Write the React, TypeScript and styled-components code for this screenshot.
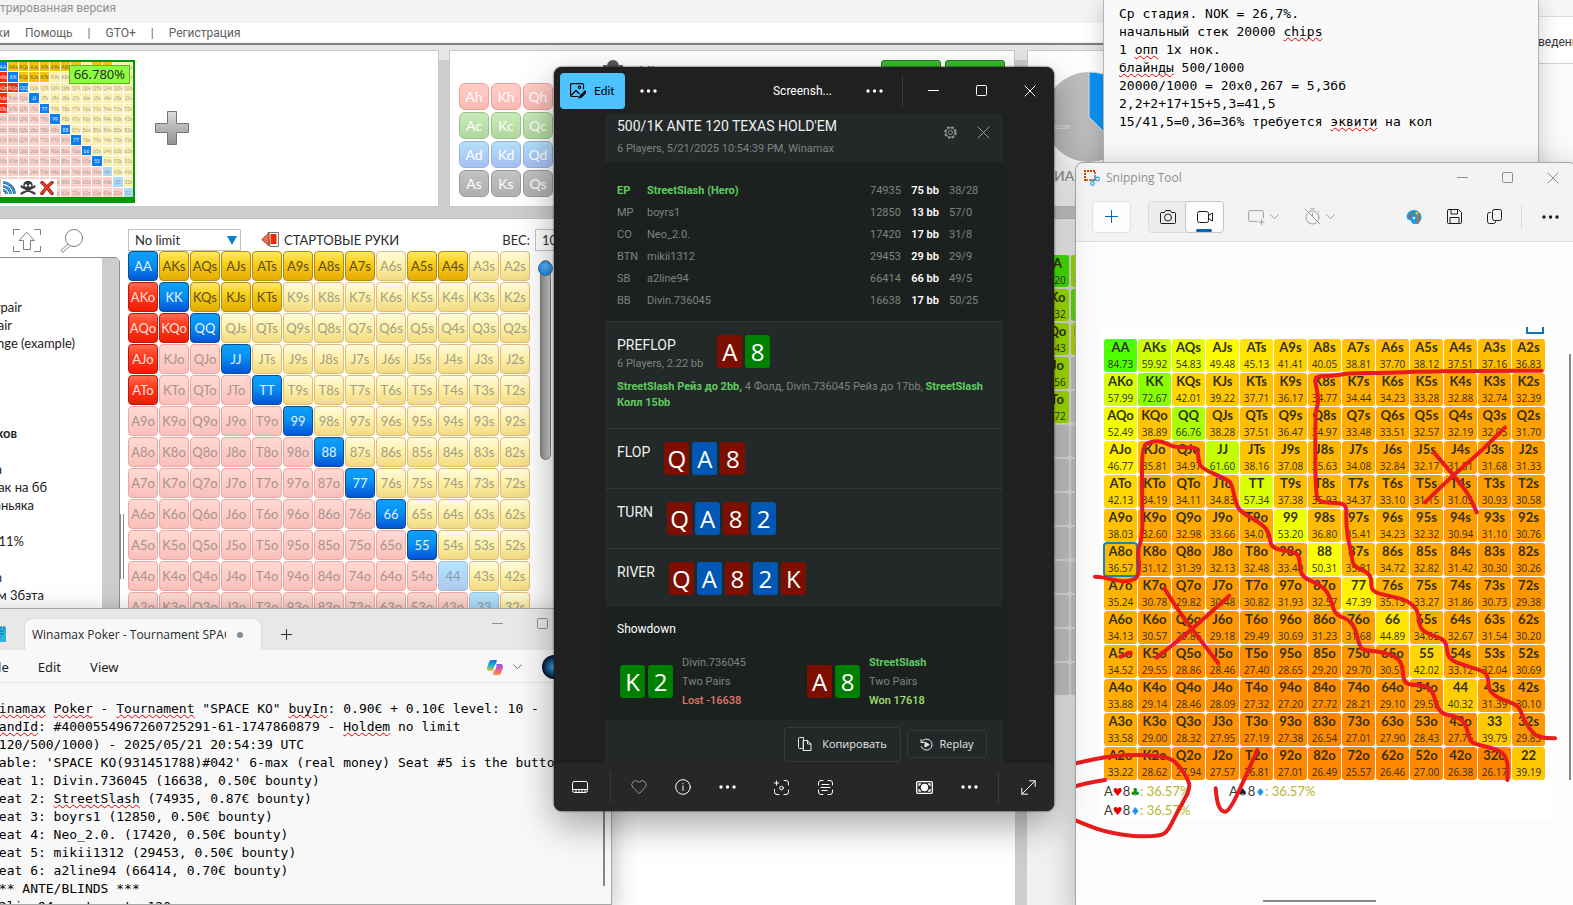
import React from "react";
import styled, { createGlobalStyle, css } from "styled-components";

const ui = `"Noto Sans", "Liberation Sans", sans-serif`;
const lato = `Lato, "Noto Sans", sans-serif`;
const open = `"Open Sans", "Noto Sans", sans-serif`;
const roboto = `Roboto, "Noto Sans", sans-serif`;
const mono = `"DejaVu Sans Mono", "Liberation Mono", monospace`;

const Global = createGlobalStyle`
  * { box-sizing: border-box; }
  html, body { margin: 0; padding: 0; height: 100%; overflow: hidden; }
  body { font-family: ${ui}; font-size: 12px; }
  button, input, select { font: inherit; color: inherit; margin: 0; }
  button { background: none; border: 0; padding: 0; }
  p, h1, h2, h3 { margin: 0; font-weight: 400; }
  svg { display: block; flex: none; }
`;

/* ---------- data ---------- */

const RANKS = "AKQJT98765432".split("");

const comboAt = (row: number, col: number) => {
  if (row === col) return RANKS[row] + RANKS[row];
  return col > row ? `${RANKS[row]}${RANKS[col]}s` : `${RANKS[col]}${RANKS[row]}o`;
};

const IN_RANGE = new Set(
  "AA KK QQ JJ TT 99 88 77 66 55 AKs AQs AJs ATs A9s A8s A7s A5s A4s KQs KJs KTs AKo AQo AJo ATo KQo".split(" ")
);

const CELLS = RANKS.flatMap((_, row) => RANKS.map((__, col) => {
  const label = comboAt(row, col);
  const kind: Kind = row === col ? "pair" : col > row ? "suited" : "offsuit";
  return { label, kind, on: IN_RANGE.has(label) };
}));

const EQUITY = [
  "84.73 59.92 54.83 49.48 45.13 41.41 40.05 38.81 37.70 38.12 37.51 37.16 36.83",
  "57.99 72.67 42.01 39.22 37.71 36.17 34.77 34.44 34.23 33.28 32.88 32.74 32.39",
  "52.49 38.89 66.76 38.28 37.51 36.47 34.97 33.48 33.51 32.57 32.19 32.05 31.70",
  "46.77 35.81 34.97 61.60 38.16 37.08 35.63 34.08 32.84 32.17 31.81 31.68 31.33",
  "42.13 34.19 34.11 34.83 57.34 37.38 35.93 34.37 33.10 31.15 31.05 30.93 30.58",
  "38.03 32.60 32.98 33.66 34.01 53.20 36.80 35.41 34.23 32.32 30.94 31.10 30.76",
  "36.57 31.12 31.39 32.13 32.48 33.40 50.31 35.81 34.72 32.82 31.42 30.30 30.26",
  "35.24 30.78 29.82 30.48 30.82 31.93 32.57 47.39 35.13 33.27 31.86 30.73 29.38",
  "34.13 30.57 29.86 29.18 29.49 30.69 31.23 31.68 44.89 34.05 32.67 31.54 30.20",
  "34.52 29.55 28.86 28.46 27.40 28.65 29.20 29.70 30.55 42.02 33.12 32.04 30.69",
  "33.88 29.14 28.46 28.09 27.32 27.20 27.72 28.21 29.10 29.53 40.32 31.39 30.10",
  "33.58 29.00 28.32 27.95 27.19 27.38 26.54 27.01 27.90 28.43 27.76 39.79 29.83",
  "33.22 28.62 27.94 27.57 26.81 27.01 26.49 25.57 26.46 27.00 26.38 26.17 39.19",
].map((r) => r.split(" "));

const heat = (v: number) =>
  v >= 50 ? `rgb(${Math.round((255 * (100 - v)) / 50)},255,0)` : `rgb(255,${Math.round((255 * v) / 50)},0)`;

/* ---------- shared ---------- */

const Desktop = styled.div`
  position: relative;
  height: 100vh;
  overflow: hidden;
  background: #e6e6e6;
`;

const Icon = ({ size = 16, children, sw = 1, h }: { size?: number; h?: number; sw?: number; children: React.ReactNode }) => (
  <svg width={size} height={h ?? size} viewBox={`0 0 ${size} ${h ?? size}`} fill="none" stroke="currentColor"
    strokeWidth={sw} strokeLinecap="round" strokeLinejoin="round" aria-hidden="true">{children}</svg>
);

const Dots = () => (
  <svg width="17" height="4" viewBox="0 0 17 4" fill="currentColor" aria-hidden="true">
    <circle cx="2" cy="2" r="1.7" /><circle cx="8.5" cy="2" r="1.7" /><circle cx="15" cy="2" r="1.7" />
  </svg>
);
const MinIcon = () => <Icon size={11}><path d="M.5 5.5h10" /></Icon>;
const MaxIcon = () => <Icon size={11}><rect x=".5" y=".5" width="10" height="10" rx="1" /></Icon>;
const CloseIcon = () => <Icon size={12}><path d="M1 1l10 10M11 1L1 11" /></Icon>;
const Chevron = () => <Icon size={9} h={6}><path d="M.5.7l4 4 4-4" /></Icon>;

const Squiggle = styled.span`
  text-decoration: underline wavy #e00000 1px;
  text-underline-offset: 1px;
  text-decoration-skip-ink: none;
`;

/* ---------- range analyser window ---------- */

const Analyser = styled.section`
  position: absolute;
  inset: 0 40px 0 -200px;
  display: flex;
  flex-direction: column;
  background: #fff;
  font-family: ${lato};
  color: #2b2b2b;
`;
const AnalyserTitle = styled.h1`
  width: 316px;
  height: 23px;
  font: 12px/16px ${roboto};
  text-align: right;
  color: #929292;
  white-space: nowrap;
`;
const TitleStrip = styled.div`background: #f3f3f3;`;
const MenuBar = styled.nav`
  display: flex;
  height: 20px;
  padding-left: 138px;
  align-items: center;
  gap: 15px;
  font: 12px/18px ${roboto};
  color: #636363;
  border-bottom: 1px solid #f0f0f0;
  button { flex: none; }
`;
const MenuFirst = styled.button`
  width: 72px;
  text-align: right;
`;
const UpperArea = styled.div`
  display: grid;
  grid-template-columns: 639px 10px 566px 12px 1fr;
  height: 175px;
  padding-top: 5px;
  padding-bottom: 11px;
  border-top: 2px solid #7d8183;
  background: linear-gradient(#e6e6e6 15px, #cdcdcd 15px);
`;
const Panel = styled.div<{ $col: number }>`
  grid-column: ${(p) => p.$col};
  background: #fff;
  border: 1px solid #c8c8c8;
  display: flex;
  min-width: 0;
`;
const Thumb = styled.button`
  position: relative;
  margin: 9px 0 0 195px;
  width: 139px;
  height: 143px;
  border: 2px solid #009a00;
  border-bottom-width: 6px;
  background: #fff;
  display: block;
`;
const ThumbGrid = styled.span`
  display: grid;
  grid-template-columns: repeat(13, 1fr);
  grid-template-rows: repeat(13, 1fr);
  gap: 1px;
  height: 135px;
`;
const MINI = { pair: ["#0a80ee", "#a9daf8"], suited: ["#f0c40c", "#fcf0b0"], offsuit: ["#fb2b12", "#fccfc9"] };
type Kind = keyof typeof MINI;
const MiniCell = styled.span<{ $k: Kind; $on: boolean }>`
  background: ${(p) => MINI[p.$k][p.$on ? 0 : 1]};
  color: ${(p) => (p.$on && p.$k !== "suited" ? "#e8e8ff" : p.$on ? "#6a5c20" : "#a9a294")};
  font-size: 5px;
  line-height: 10px;
  text-align: center;
  overflow: hidden;
`;
const Percent = styled.span`
  position: absolute;
  top: 3px;
  right: 3px;
  padding: 0 4px;
  border: 1px solid #58b428;
  background: #8dff40;
  font: 13px/17px ${open};
  color: #222;
`;
const ThumbTools = styled.span`
  position: absolute;
  left: 3px;
  bottom: 0;
  width: 56px;
  height: 18px;
  padding-left: 1px;
  background: #fff;
  display: flex;
  gap: 4px;
  align-items: center;
`;
const AddRange = styled.button`
  align-self: center;
  margin: 0 0 2px 20px;
`;
const DeckGrid = styled.div`
  display: grid;
  grid-template-columns: repeat(3, 30px);
  grid-auto-rows: 27px;
  gap: 2px;
  margin: 32px 0 0 9px;
`;
const DECK: Record<string, string[]> = {
  h: ["#ffcdc8", "#fbb9b4", "#f0a09b"],
  c: ["#c8eab8", "#b2d6a2", "#96c48a"],
  d: ["#b4e0fb", "#a5bff2", "#93b4dc"],
  s: ["#c2c2c2", "#b0b0b0", "#9c9c9c"],
};
const DeckCard = styled.button<{ $s: string }>`
  border: 1px solid ${(p) => DECK[p.$s][2]};
  border-radius: 6px;
  background: linear-gradient(${(p) => DECK[p.$s][0]}, ${(p) => DECK[p.$s][1]});
  color: #fff;
  font: 14px/20px ${lato};
`;
const BoardArea = styled.div`
  margin: 9px 0 0 50px;
  display: flex;
  align-items: flex-start;
  gap: 16px;
`;
const BoardButtons = styled.div`
  display: flex;
  gap: 4px;
  margin-left: 204px;
`;
const GreenButton = styled.button`
  width: 60px;
  height: 22px;
  border: 1px solid #1f7f1f;
  border-radius: 3px;
  background: #3cbb30;
`;
const BoardTitle = styled.span`
  padding-top: 2px;
  font-size: 13px;
  line-height: 18px;
  color: #a06428;
`;
const StatsPanel = styled.div`
  display: flex;
  flex-direction: column;
  gap: 3px;
  padding: 20px 0 0 15px;
`;
const StatsTitle = styled.span`
  font: 14px/20px ${lato};
  color: #85888c;
  white-space: nowrap;
`;

const LowerArea = styled.div`
  flex: 1;
  display: grid;
  grid-template-columns: 320px 8px 887px 12px 1fr;
  border-top: 1px solid #c2c2c2;
  min-height: 0;
`;
const TreeColumn = styled.div`
  display: flex;
  flex-direction: column;
  min-height: 0;
`;
const TreeTools = styled.div`
  display: flex;
  gap: 18px;
  padding: 9px 0 0 212px;
  height: 38px;
  color: #808080;
`;
const Tree = styled.div`
  flex: 1;
  display: flex;
  border: 1px solid #8e8e8e;
  border-top-right-radius: 5px;
  overflow: hidden;
`;
const TreeRows = styled.ul`
  flex: 1;
  margin: 0;
  padding: 40px 0 0;
  list-style: none;
  font: 13px/18px ${lato};
  color: #222;
  li { height: 18px; text-align: right; white-space: nowrap; }
`;
const TreeRow = styled.li<{ $end: number; $bold?: boolean }>`
  padding-right: ${(p) => 302 - p.$end - 200}px;
  font-weight: ${(p) => (p.$bold ? 700 : 400)};
`;
const TreeScroll = styled.div`
  width: 17px;
  background: #cdcdcd;
`;
const Grip = styled.div`
  align-self: start;
  margin-top: 295px;
  height: 65px;
  width: 4px;
  border-right: 1px solid #8a8a8a;
  border-left: 1px solid #8a8a8a;
`;
const RangeColumn = styled.div`
  grid-column: 3;
  padding-top: 9px;
`;
const RangeHeader = styled.div`
  display: flex;
  height: 23px;
  align-items: center;
  font: 13px/20px ${lato};
`;
const LimitSelect = styled.select`
  display: block;
  width: 113px;
  height: 22px;
  padding: 0 0 0 6px;
  border: 1px solid #c2c2c2;
  border-radius: 0;
  appearance: none;
  background: #fff;
  font: 13px/18px ${lato};
`;
const SelectWrap = styled.label`
  position: relative;
  margin-right: 20px;
  svg { position: absolute; right: 4px; top: 7px; pointer-events: none; }
`;
const RangeTitle = styled.h2`
  margin: 0 auto 0 5px;
  font: 13px/20px ${lato};
`;
const WeightLabel = styled.label`
  display: flex;
  align-items: center;
  gap: 5px;
`;
const WeightInput = styled.input`
  width: 44px;
  height: 22px;
  padding: 0 6px;
  border: 1px solid #c2c2c2;
`;
const HeaderInner = styled.div`
  display: flex;
  align-items: center;
  width: 451px;
`;
const RangeBody = styled.div`
  display: flex;
  gap: 9px;
`;
const RangeGrid = styled.div`
  display: grid;
  grid-template-columns: repeat(13, 30px);
  grid-auto-rows: 30px;
  gap: 1px;
`;
const RANGE_SKIN: Record<Kind, [string, string]> = {
  pair: [
    "background:linear-gradient(#0fa0fa,#0790f0 45%,#0553d8);border-color:#0b4f86;color:#e4efff;",
    "background:linear-gradient(#b9e4fb,#abd9f8 50%,#b3c8ee);border-color:#9fc0dc;color:#8f9aa5;",
  ],
  suited: [
    "background:linear-gradient(#ffea62,#f9cf1a 40%,#e4ab00);border-color:#b98a12;color:#5b4c1a;",
    "background:linear-gradient(#fffbe0,#fff2a8 45%,#f1da84);border-color:#e2bb7a;color:#a19d8c;",
  ],
  offsuit: [
    "background:linear-gradient(#ff6a50,#ff3a1c 40%,#f01c04);border-color:#c01810;color:#ffe4e0;",
    "background:linear-gradient(#ffdad2,#fdcdc6 50%,#f9bfbb);border-color:#eda6a4;color:#a79490;",
  ],
};
const RangeCell = styled.button<{ $k: Kind; $on: boolean }>`
  border: 1px solid;
  border-radius: 4px;
  font: 13px/20px ${lato};
  ${(p) => RANGE_SKIN[p.$k][p.$on ? 0 : 1]}
`;
const WeightTrack = styled.div`
  width: 11px;
  height: 200px;
  margin: 9px 0 0 1px;
  border: 1px solid #7c7c7c;
  border-radius: 6px;
  background: linear-gradient(90deg, #8d8d8d, #cfcfcf);
`;
const WeightKnob = styled.div`
  width: 15px;
  height: 15px;
  margin-left: -3px;
  border-radius: 50%;
  border: 1px solid #1f6fb4;
  background: radial-gradient(circle at 50% 30%, #5cb8fa, #1378da);
`;
const Splitter = styled.div`
  grid-column: 4;
  background: #cdcdcd;
`;
const ResultColumn = styled.div`
  padding: 36px 0 0 10px;
  background: linear-gradient(#fafafa, #f0f0f0);
`;
const ResultGrid = styled.div`
  display: grid;
  grid-template-columns: repeat(3, 32px);
  grid-auto-rows: 32px;
  gap: 2px;
  width: max-content;
  background: #e6e6e6;
`;

const EquityCell = styled.div<{ $bg: string; $active?: boolean }>`
  display: flex;
  flex-direction: column;
  align-items: center;
  border-radius: 3px;
  background: ${(p) => p.$bg};
  color: #33301a;
  ${(p) => p.$active && css`outline: 2px solid #1a80c8; outline-offset: -1px;`}
`;
const EquityHand = styled.span`font: 700 13px/17px ${lato};`;
const EquityValue = styled.span`font: 10px/16px ${open};`;

const RESULTS: [string, string, string][] = [
  ["AA", "85.20", "#46ee00"], ["AKs", "67.04", "#a8e800"], ["AQs", "66.21", "#a8e800"],
  ["AKo", "65.32", "#a4ea00"], ["KK", "82.40", "#5aee00"], ["KQs", "63.40", "#a8e800"],
  ["AQo", "64.43", "#a8ea00"], ["KQo", "60.12", "#b8ea00"], ["QQ", "79.93", "#66ee00"],
  ["AJo", "63.56", "#a8ea00"], ["KJo", "0", "#cdcdcd"], ["QJo", "0", "#cdcdcd"],
  ["ATo", "62.72", "#a8ea00"], ["KTo", "0", "#cdcdcd"], ["QTo", "0", "#cdcdcd"],
];

const TREE: [string, number, boolean?][] = [
  ["Overpair", 22], ["Top pair", 12], ["Range (example)", 75], ["", 0], ["", 0], ["", 0], ["", 0],
  ["Рендж игроков", 17, true], ["", 0], ["Защита", 2], ["Колл атак на бб", 47], ["Против маньяка", 34], ["", 0],
  ["Стил 11%", 24], ["", 0], ["Open", 2], ["С опеном 3бэта", 44], ["Колл 3б", 32],
];

const AnalyserWindow = () => (
  <Analyser>
    <TitleStrip><AnalyserTitle>Зарегистрированная версия</AnalyserTitle></TitleStrip>
    <MenuBar>
      <MenuFirst>Настройки</MenuFirst><button>Помощь</button><span>|</span>
      <button>GTO+</button><span>|</span><button>Регистрация</button>
    </MenuBar>
    <UpperArea>
      <Panel $col={1}>
        <Thumb aria-label="Player range">
          <ThumbGrid>
            {CELLS.map((c) => <MiniCell key={c.label} $k={c.kind} $on={c.on}>{c.label}</MiniCell>)}
          </ThumbGrid>
          <Percent>66.780%</Percent>
          <ThumbTools>
            <svg width="14" height="14" viewBox="0 0 14 14" fill="none">
              <path d="M1 1.500C7 1.500 12.500 7 12.500 13M1 5.500C5 5.500 8.500 9 8.500 13M1 9.500C3 9.500 4.500 11 4.500 13" stroke="#0a5078" strokeWidth="2.600" />
              <path d="M1 1.500C7 1.500 12.500 7 12.500 13M1 5.500C5 5.500 8.500 9 8.500 13M1 9.500C3 9.500 4.500 11 4.500 13" stroke="#30a8e8" strokeWidth="1.400" />
            </svg>
            <svg width="16" height="14" viewBox="0 0 16 14">
              <path d="M1.500 5.500l13 7M14.500 5.500L1.500 12.500" stroke="#3a3a3a" strokeWidth="2.200" strokeLinecap="round" />
              <path d="M8 0C4.500 0 3.300 2 3.300 4.300c0 1.500.7 2.300 1.700 2.900v2.300h6V7.200c1-.6 1.700-1.400 1.700-2.900C12.700 2 11.500 0 8 0z" fill="#3a3a3a" />
              <circle cx="6" cy="4.600" r="1.300" fill="#fff" /><circle cx="10" cy="4.600" r="1.300" fill="#fff" />
            </svg>
            <svg width="14" height="14" viewBox="0 0 14 14" fill="none" strokeLinecap="round">
              <path d="M2 1.500Q6 5 12 12.500M12 1.500Q6 6 2 12.500" stroke="#8a1010" strokeWidth="3.400" />
              <path d="M2 1.500Q6 5 12 12.500M12 1.500Q6 6 2 12.500" stroke="#f03a28" strokeWidth="2" />
            </svg>
          </ThumbTools>
        </Thumb>
        <AddRange aria-label="Add range">
          <svg width="34" height="34" viewBox="0 0 34 34">
            <defs><linearGradient id="plus" x1="0" y1="0" x2="0" y2="1">
              <stop offset="0" stopColor="#dcdcdc" /><stop offset="1" stopColor="#909090" />
            </linearGradient></defs>
            <path d="M12.500.5h9v12h12v9h-12v12h-9v-12H.5v-9h12z" fill="url(#plus)" stroke="#747474" />
          </svg>
        </AddRange>
      </Panel>
      <Panel $col={3}>
        <DeckGrid>
          {["h", "c", "d", "s"].flatMap((s) => ["A", "K", "Q"].map((r) => <DeckCard key={r + s} $s={s}>{r + s}</DeckCard>))}
        </DeckGrid>
        <BoardArea>
          <Icon size={20} sw={2}><circle cx="10" cy="6" r="5" fill="#555" stroke="#555" /><path d="M1 6h2M17 6h2" stroke="#555" /></Icon>
          <BoardTitle>Mix</BoardTitle>
          <BoardButtons><GreenButton aria-label="Flop" /><GreenButton aria-label="Turn" /></BoardButtons>
        </BoardArea>
      </Panel>
      <Panel $col={5}>
        <StatsPanel>
          <svg width="92" height="92" viewBox="0 0 92 92">
            <circle cx="46" cy="46" r="45" fill="#bdbdbd" />
            <path d="M46 46V1A45 45 0 0 1 78 78z" fill="#0a93f5" stroke="#e0e0e0" />
            <text x="10" y="58" fontSize="5" fill="#eee" fontFamily="Lato">63.25%</text>
          </svg>
          <StatsTitle>ДИАГРАММА</StatsTitle>
        </StatsPanel>
      </Panel>
    </UpperArea>
    <LowerArea>
      <TreeColumn>
        <TreeTools>
          <Icon size={30} h={25}>
            <path d="M1.500 6.500v-5h6M22.500 1.500h6v5M28.500 18.500v5h-6M7.500 23.500h-6v-5" />
            <path d="M15 4.500l7.500 8h-4v9h-7v-9h-4z" />
          </Icon>
          <Icon size={24} h={25}><circle cx="14" cy="10" r="8.500" /><path d="M7.500 16.500L.8 22.500l2.200 1.800 6.500-6" /></Icon>
        </TreeTools>
        <Tree>
          <TreeRows>
            {TREE.map(([t, end, b], i) => <TreeRow key={i} $end={end} $bold={b}>{t}</TreeRow>)}
          </TreeRows>
          <TreeScroll />
        </Tree>
      </TreeColumn>
      <Grip />
      <RangeColumn>
        <RangeHeader>
          <HeaderInner>
            <SelectWrap>
              <LimitSelect aria-label="Game type"><option>No limit</option></LimitSelect>
              <svg width="10" height="9" viewBox="0 0 10 9"><path d="M0 0h10L5 9z" fill="#0a80c4" /></svg>
            </SelectWrap>
            <svg width="18" height="16" viewBox="0 0 18 16">
              <path d="M7 .5h10.500v14H9z" fill="#fff" stroke="#777" />
              <path d="M8 1v13L.8 7.500z" fill="#f26a48" stroke="#8a4030" />
              <rect x="9.500" y="2" width="6" height="10" fill="#f02a08" />
            </svg>
            <RangeTitle>СТАРТОВЫЕ РУКИ</RangeTitle>
            <WeightLabel>ВЕС:<WeightInput defaultValue="100" /></WeightLabel>
          </HeaderInner>
        </RangeHeader>
        <RangeBody>
          <RangeGrid>
            {CELLS.map((c) => <RangeCell key={c.label} $k={c.kind} $on={c.on}>{c.label}</RangeCell>)}
          </RangeGrid>
          <WeightTrack><WeightKnob /></WeightTrack>
        </RangeBody>
      </RangeColumn>
      <Splitter />
      <ResultColumn>
        <ResultGrid>
          {RESULTS.map(([h, v, c]) => (
            <EquityCell key={h} $bg={c}>
              {v !== "0" && <><EquityHand>{h}</EquityHand><EquityValue>{v}</EquityValue></>}
            </EquityCell>
          ))}
          {Array.from({ length: 24 }, (_, i) => <EquityCell key={i} $bg="#cdcdcd" />)}
        </ResultGrid>
      </ResultColumn>
    </LowerArea>
  </Analyser>
);

/* ---------- notepad with the hand history ---------- */

const Notepad = styled.section`
  position: absolute;
  inset: 608px auto 0 -20px;
  width: 632px;
  display: flex;
  flex-direction: column;
  border: 1px solid #a8a8a8;
  background: #f8f8f8;
  box-shadow: 0 6px 24px rgba(0, 0, 0, 0.3);
`;
const TabStrip = styled.div`
  display: flex;
  height: 41px;
  padding-left: 5px;
  background: #e8e8e8;
  color: #2a2a2a;
`;
const NoteLogo = styled.span`
  margin: 16px 17px 0 7px;
`;
const Tab = styled.div`
  display: flex;
  align-items: center;
  width: 238px;
  height: 32px;
  margin-top: 9px;
  padding-left: 7px;
  border: 1px solid #dcdcdc;
  border-bottom: 0;
  border-radius: 8px 8px 0 0;
  background: #f8f8f8;
`;
const TabText = styled.span`
  width: 194px;
  margin-right: 11px;
  overflow: hidden;
  white-space: nowrap;
  font: 500 12px/18px ${open};
`;
const DirtyDot = styled.i`
  width: 6px;
  height: 6px;
  border-radius: 50%;
  background: #8c8c8c;
`;
const NewTab = styled.button`
  align-self: center;
  margin: 9px auto 0 19px;
`;
const StripControls = styled.div`
  display: flex;
  gap: 34px;
  padding: 9px 63px 0 0;
  color: #8c8c8c;
`;
const NoteMenu = styled.div`
  display: flex;
  align-items: center;
  height: 33px;
  padding: 2px 0 0 7px;
  border-bottom: 1px solid #e5e5e5;
  font: 13px/18px ${ui};
  color: #1e1e1e;
  gap: 29px;
`;
const NoteMenuEnd = styled.div`
  display: flex;
  align-items: center;
  gap: 10px;
  margin: 0 45px 0 auto;
  color: #707070;
`;
const Avatar = styled.i`
  width: 24px;
  height: 24px;
  margin-left: 10px;
  border-radius: 50%;
  background: radial-gradient(circle, #40b0ff, #001028 70%);
`;
const NoteBody = styled.div`
  flex: 1;
  display: flex;
  min-height: 0;
  overflow: hidden;
`;
const NoteText = styled.div`
  flex: 1;
  padding: 17px 0 0 10px;
  font: 13px/18px ${mono};
  color: #000;
  white-space: pre;
  overflow: hidden;
`;
const NoteScroll = styled.div`
  width: 2px;
  height: 203px;
  margin-right: 6px;
  background: #858585;
`;

const HandHistory = () => (
  <Notepad>
    <TabStrip>
      <NoteLogo>
        <svg width="14" height="18" viewBox="0 0 14 18">
          <rect x="0" y="2" width="13" height="15" rx="1" fill="#30b4dc" /><path d="M2 6h9M2 9h9M2 12h6" stroke="#0b6c92" />
          <path d="M2 1v3M5 1v3M8 1v3M11 1v3" stroke="#0b6c92" />
        </svg>
      </NoteLogo>
      <Tab><TabText>Winamax Poker - Tournament SPACE KO</TabText><DirtyDot /></Tab>
      <NewTab aria-label="New tab"><Icon size={11}><path d="M5.500.5v10M.5 5.500h10" /></Icon></NewTab>
      <StripControls><MinIcon /><MaxIcon /></StripControls>
    </TabStrip>
    <NoteMenu>
      <button>File</button><button>Edit</button><button>View</button>
      <NoteMenuEnd>
        <svg width="16" height="15" viewBox="0 0 16 15">
          <defs>
            <linearGradient id="cpa" x1="0" y1="0" x2="0" y2="1"><stop offset="0" stopColor="#1a6fe8" /><stop offset=".5" stopColor="#18b4c8" /><stop offset="1" stopColor="#e8c820" /></linearGradient>
            <linearGradient id="cpb" x1="0" y1="0" x2="0" y2="1"><stop offset="0" stopColor="#9050e8" /><stop offset=".5" stopColor="#e85aa0" /><stop offset="1" stopColor="#ff8a3c" /></linearGradient>
          </defs>
          <path d="M4.500 0H10L7 11H2.500C0 11-.3 8.500.4 6.500L2 2C2.500.7 3.300 0 4.500 0z" fill="url(#cpa)" />
          <path d="M11.500 15H6L9 4h4.500c2.500 0 2.800 2.500 2.100 4.500L14 13c-.5 1.300-1.300 2-2.500 2z" fill="url(#cpb)" />
          <path d="M9 4.500L7 10.500" stroke="#f8f8f8" strokeWidth="2" />
        </svg>
        <Chevron />
        <Avatar />
      </NoteMenuEnd>
    </NoteMenu>
    <NoteBody>
      <NoteText role="textbox" aria-label="Hand history">
        <Squiggle>Winamax</Squiggle> <Squiggle>Poker</Squiggle> - <Squiggle>Tournament</Squiggle> "SPACE KO" <Squiggle>buyIn</Squiggle>: 0.90€ + 0.10€ level: 10 -{"\n"}
        <Squiggle>HandId</Squiggle>: #4000554967260725291-61-1747860879 - <Squiggle>Holdem</Squiggle> no limit{"\n"}
        {"(120/500/1000) - 2025/05/21 20:54:39 UTC\nTable: 'SPACE KO(931451788)#042' 6-max (real money) Seat #5 is the button\nSeat 1: Divin.736045 (16638, 0.50€ bounty)\nSeat 2: "}
        <Squiggle>StreetSlash</Squiggle>
        {" (74935, 0.87€ bounty)\nSeat 3: boyrs1 (12850, 0.50€ bounty)\nSeat 4: Neo_2.0. (17420, 0.50€ bounty)\nSeat 5: mikii1312 (29453, 0.50€ bounty)\nSeat 6: a2line94 (66414, 0.70€ bounty)\n*** ANTE/BLINDS ***\na2line94 posts ante 120"}
      </NoteText>
      <NoteScroll />
    </NoteBody>
  </Notepad>
);

/* ---------- small windows on the right ---------- */

const SideWindow = styled.section`
  position: absolute;
  inset: 0 0 0 auto;
  width: 35px;
  background: linear-gradient(#f6f6f6 16px, #dcdcdc 16px 17px, #fff 17px 63px, #d0d0d0 63px 64px, #fafafa 64px);
  padding-top: 33px;
  font: 12px/18px ${roboto};
  color: #333;
  overflow: hidden;
  white-space: nowrap;
`;
const Notes = styled.section`
  position: absolute;
  inset: 0 34px auto 1103px;
  height: 200px;
  padding: 5px 0 0 15px;
  border: 1px solid #b4b4b4;
  border-top: 0;
  background: #f9f9f9;
  box-shadow: 0 4px 20px rgba(0, 0, 0, 0.2);
  font: 13px/18px ${mono};
  color: #000;
  white-space: pre;
`;

/* ---------- snipping tool ---------- */

const Snip = styled.section`
  position: absolute;
  inset: 162px -4px -8px 1075px;
  display: flex;
  flex-direction: column;
  border: 1px solid #a6a6a6;
  border-radius: 8px 8px 0 0;
  background: #f3f3f3;
  box-shadow: 0 6px 30px rgba(0, 0, 0, 0.25);
  overflow: hidden;
`;
const SnipTitle = styled.header`
  display: flex;
  align-items: center;
  height: 29px;
  padding: 0 17px 0 8px;
  color: #8e8e8e;
  h2 { margin: 0 auto 0 6px; font: 12px/18px ${open}; }
`;
const SnipControls = styled.div`
  display: flex;
  align-items: center;
  gap: 34px;
`;
const SnipTools = styled.div`
  display: flex;
  align-items: center;
  height: 50px;
  padding: 0 17px 0 16px;
  border-bottom: 1px solid #dedede;
  color: #1c1c1c;
`;
const NewSnip = styled.button`
  display: grid;
  place-items: center;
  width: 39px;
  height: 32px;
  margin-right: 17px;
  border: 1px solid #e2e2e2;
  border-radius: 4px;
  background: #fdfdfd;
  color: #0067c0;
`;
const Segmented = styled.div`
  display: flex;
  height: 32px;
  margin-right: 24px;
  border-radius: 4px;
  border: 1px solid #dadada;
  background: #ececec;
`;
const Segment = styled.button<{ $on?: boolean }>`
  position: relative;
  display: grid;
  place-items: center;
  width: 39px;
  margin: -1px;
  ${(p) => p.$on && css`
    border: 1px solid #c4c4c4;
    border-radius: 4px;
    background: #fdfdfd;
    &::after {
      content: "";
      position: absolute;
      left: 10px;
      bottom: 0;
      width: 16px;
      height: 3px;
      border-radius: 2px;
      background: #0067c0;
    }
  `}
`;
const DimPair = styled.button`
  display: flex;
  align-items: center;
  gap: 5px;
  margin-right: 25px;
  color: #a0a0a0;
`;
const SnipEnd = styled.div`
  display: flex;
  align-items: center;
  gap: 25px;
  margin-left: auto;
`;
const Rule = styled.i`
  width: 1px;
  height: 24px;
  margin: 0 -5px 0 -6px;
  background: #dadada;
`;
const SnipBody = styled.div`
  position: relative;
  flex: 1;
  padding: 85px 0 0 24px;
  background: #fcfcfc;
`;
const Capture = styled.div`
  width: 452px;
  height: 494px;
  padding: 12px 0 0 4px;
  background: #fff;
`;
const EquityMap = styled.div`
  display: grid;
  grid-template-columns: repeat(13, 33px);
  grid-auto-rows: 33px;
  gap: 1px;
`;
const SuitLine = styled.p`
  display: grid;
  grid-template-columns: 125px auto;
  font: 13px/18px ${lato};
  color: #3a3a3a;
`;
const SuitLines = styled.div`padding-top: 2px;`;
const Pct = styled.span`color: #b9b52a;`;
const Suit = styled.span<{ $c: string }>`
  color: ${(p) => p.$c};
  font: 11px/16px "DejaVu Sans", sans-serif;
`;
const Ink = styled.svg`
  position: absolute;
  left: 0;
  top: 0;
`;
const VScroll = styled.i`
  position: absolute;
  right: 5px;
  top: 112px;
  width: 2px;
  height: 426px;
  background: #8a8a8a;
`;
const HScroll = styled.i`
  position: absolute;
  left: 187px;
  bottom: 10px;
  width: 113px;
  height: 2px;
  background: #8a8a8a;
`;
const TopMark = styled.i`
  position: absolute;
  left: 450px;
  top: 85px;
  width: 18px;
  height: 7px;
  border: 2px solid #1a70b8;
  border-top: 0;
`;

const STROKES = [
  "1415,152 1180,153 1050,155 960,158 830,160 790,168 732,168 740,205 745,235 742,262 736,275 736,520 748,548 815,548 830,562 828,590 832,650 845,700 848,738 890,755 905,775 903,815 965,830 1010,840 1045,870 1048,925 1080,945 1130,960 1132,1018 1190,1038 1245,1055 1255,1075 1256,1110 1285,1135 1345,1155 1358,1190 1380,1230 1405,1253 1455,1255",
  "75,770 95,770 150,785 185,782 205,770 208,735 203,690 218,650 216,520 216,378 240,366 275,362 310,382 360,382 382,385 386,425 395,445 470,478 485,490 500,560 520,580 580,615 598,640 602,675 620,688 665,695 688,705 690,755 705,775 760,800 780,830 795,885 830,895 855,920 870,985 890,992 940,995 985,1015 998,1040 1000,1080 1015,1095 1065,1095 1090,1115 1105,1180 1170,1192 1190,1220 1200,1262 1215,1272 1290,1290 1314,1320 1312,1380",
  "1092,398 1150,465 1195,520 1220,577",
  "1305,322 1240,388 1150,465 1065,547",
  "283,805 330,880 380,945 445,1030",
  "478,827 370,925 260,1013",
  "152,1010 182,998",
  "18,1330 110,1308 220,1304 300,1312 330,1340 352,1375 362,1405 320,1480 290,1540 260,1548 200,1550 100,1535 18,1502",
  "18,1398 60,1388 105,1380",
  "437,1405 440,1450 460,1480 482,1465 520,1385 562,1290",
];

/* Rounds a polyline by running quadratic curves through its midpoints. */
const smooth = (pts: string) => {
  const p = pts.split(" ").map((s) => s.split(",").map(Number));
  let d = `M${p[0]}`;
  for (let i = 1; i < p.length - 1; i++) {
    d += `Q${p[i]} ${(p[i][0] + p[i + 1][0]) / 2},${(p[i][1] + p[i + 1][1]) / 2}`;
  }
  return `${d}L${p[p.length - 1]}`;
};

const SnippingTool = () => (
  <Snip>
    <SnipTitle>
      <svg width="16" height="16" viewBox="0 0 16 16" fill="none">
        <path d="M1 11V1h10" stroke="#d83b01" strokeWidth="2" strokeDasharray="2 1" />
        <path d="M11 2v5M2 10h4" stroke="#d83b01" strokeWidth="1.500" strokeDasharray="2 1" />
        <path d="M11 5v5H6" stroke="#909090" strokeWidth="2" />
        <circle cx="13.500" cy="9" r="1.800" stroke="#2aa4e0" strokeWidth="1.200" /><circle cx="8.500" cy="13.500" r="1.800" stroke="#2aa4e0" strokeWidth="1.200" />
      </svg>
      <h2>Snipping Tool</h2>
      <SnipControls><MinIcon /><MaxIcon /><CloseIcon /></SnipControls>
    </SnipTitle>
    <SnipTools>
      <NewSnip aria-label="New"><Icon size={13}><path d="M6.500.5v12M.5 6.500h12" /></Icon></NewSnip>
      <Segmented>
        <Segment aria-label="Snip">
          <Icon size={16}><path d="M1.500 3.500h3l1.200-2h4.600l1.200 2h3a1 1 0 0 1 1 1v9a1 1 0 0 1-1 1h-13a1 1 0 0 1-1-1v-9a1 1 0 0 1 1-1z" /><circle cx="8" cy="8.500" r="3.500" /></Icon>
        </Segment>
        <Segment aria-label="Record" $on>
          <Icon size={16}><rect x=".5" y="2.500" width="11" height="11" rx="2" /><path d="M11.500 6.500l4-2.500v8l-4-2.500" /></Icon>
        </Segment>
      </Segmented>
      <DimPair aria-label="Shape">
        <Icon size={17}><path d="M9 13.500H2.500a2 2 0 0 1-2-2v-7a2 2 0 0 1 2-2h11a2 2 0 0 1 2 2V10M13.500 11.500v5M11 14h5" /></Icon><Chevron />
      </DimPair>
      <DimPair aria-label="Delay">
        <Icon size={17}><circle cx="8.500" cy="9.500" r="6.500" /><path d="M6.500 1h4M8.500 5.500v3M14 3l1 1M1 1l15 15" /></Icon><Chevron />
      </DimPair>
      <SnipEnd>
        <svg width="16" height="16" viewBox="0 0 16 16">
          <path d="M8 1C3 1 0 5 1 9c1 3 3 1 4 3 .6 2 1 3 4 3 4 0 6.500-3.500 6.500-7S12 1 8 1z" fill="#1e98e4" />
          <circle cx="4" cy="7" r="1.500" fill="#d84020" /><circle cx="7" cy="3.700" r="1.500" fill="#30a040" /><circle cx="11" cy="4" r="1.500" fill="#f0c020" />
          <path d="M13 5l-1.500 10" stroke="#b07838" strokeWidth="2.200" /><circle cx="8" cy="9" r="1.300" fill="#e8f4ff" />
        </svg>
        <Icon size={15}><path d="M1.500.5h10l3 3v10a1 1 0 0 1-1 1h-12a1 1 0 0 1-1-1v-12a1 1 0 0 1 1-1zM4 .5V5h6.500V.5M3 14.500V8.500h9v6" /></Icon>
        <Icon size={15}><rect x="5.500" y=".5" width="9" height="11" rx="2" /><path d="M3.500 3.500h-1a2 2 0 0 0-2 2v7a2 2 0 0 0 2 2h4a2 2 0 0 0 2-2v-.5" /></Icon>
        <Rule />
        <Dots />
      </SnipEnd>
    </SnipTools>
    <SnipBody>
      <Capture>
        <EquityMap>
          {EQUITY.flatMap((line, r) => line.map((v, c) => (
            <EquityCell key={`${r}-${c}`} $bg={heat(Number(v))} $active={comboAt(r, c) === "A8o"}>
              <EquityHand>{comboAt(r, c)}</EquityHand><EquityValue>{v}</EquityValue>
            </EquityCell>
          )))}
        </EquityMap>
        <SuitLines>
          <SuitLine>
            <span>A<Suit $c="#e80000">♥</Suit>8<Suit $c="#109010">♣</Suit><Pct>: 36.57%</Pct></span>
            <span>A<Suit $c="#222">♠</Suit>8<Suit $c="#1a90f8">♦</Suit><Pct>: 36.57%</Pct></span>
          </SuitLine>
          <SuitLine><span>A<Suit $c="#e80000">♥</Suit>8<Suit $c="#1a90f8">♦</Suit><Pct>: 36.57%</Pct></span></SuitLine>
        </SuitLines>
      </Capture>
      <TopMark />
      <Ink width="492" height="660" viewBox="18 -234 1476 1980" fill="none" stroke="#e81c1c" strokeWidth="12" strokeLinecap="round" strokeLinejoin="round">
        {STROKES.map((s) => <path key={s} d={smooth(s)} />)}
      </Ink>
      <VScroll /><HScroll />
    </SnipBody>
  </Snip>
);

/* ---------- photo viewer ---------- */

const Viewer = styled.section`
  position: absolute;
  left: 554px;
  top: 67px;
  width: 500px;
  display: flex;
  flex-direction: column;
  border-radius: 8px;
  background: #202020;
  color: #fff;
  box-shadow: 0 0 2px #000, 0 14px 36px rgba(0, 0, 0, 0.35);
  overflow: hidden;
`;
const ViewerTop = styled.header`
  display: flex;
  align-items: center;
  height: 47px;
  padding: 0 18px 0 6px;
`;
const EditButton = styled.button`
  display: flex;
  align-items: center;
  gap: 8px;
  width: 65px;
  height: 36px;
  margin-right: 15px;
  padding-left: 10px;
  border-radius: 4px;
  background: #4cc2ff;
  color: #000;
  font: 12px/18px ${lato};
`;
const FileName = styled.span`
  margin: 0 34px 0 auto;
  font: 12px/18px ${roboto};
`;
const VRule = styled.i<{ $l: number; $r: number }>`
  width: 1px;
  height: 32px;
  margin: 0 ${(p) => p.$r}px 0 ${(p) => p.$l}px;
  background: #3a3a3a;
`;
const WinButtons = styled.div`
  display: flex;
  align-items: center;
  gap: 37px;
`;
const Hand = styled.article`
  width: 398px;
  margin-left: 51px;
  background: #232928;
  font: 11px/16px ${roboto};
  color: #7f8381;
`;
const HandHead = styled.header`
  display: flex;
  height: 48px;
  padding: 2px 13px 0 12px;
  h2 { font: 14px/20px ${roboto}; color: #f0f0f0; }
`;
const HeadText = styled.div`
  margin-right: auto;
  p { padding-top: 5px; }
`;
const HeadIcons = styled.div`
  display: flex;
  align-items: center;
  gap: 20px;
  height: 32px;
  color: #999;
`;
const Players = styled.div`
  height: 159px;
  padding: 18px 12px 0;
  background: #1c211f;
  table { border-collapse: collapse; table-layout: fixed; width: 370px; }
  td { height: 22px; padding: 0; white-space: nowrap; }
  td:nth-child(1) { width: 30px; }
  td:nth-child(3) { width: 40px; }
  td:nth-child(4) { width: 29px; font-weight: 600; color: #fff; text-align: right; }
  td:nth-child(5) { width: 48px; padding-left: 10px; }
`;
const HeroCell = styled.td<{ $hero: boolean }>`
  ${(p) => p.$hero && css`color: #5fcb5f; font-weight: 700;`}
`;
const Street = styled.section<{ $h: number }>`
  height: ${(p) => p.$h}px;
  padding: 13px 12px 0;
  border-top: 1px solid #303735;
`;
const StreetRow = styled.div`
  display: flex;
  gap: 14px;
  h3 { font: 14px/20px ${roboto}; color: #f0f0f0; }
`;
const StreetName = styled.div`
  p { line-height: 18px; }
`;
const Actions = styled.p`
  padding-top: 6px;
  b { color: #5fcb5f; font-weight: 700; }
`;
const Cards = styled.div`
  display: flex;
  gap: 3px;
`;
const SUITS: Record<string, string> = { h: "#7d0f00", c: "#008000", d: "#0058b4" };
const Card = styled.span<{ $s: string }>`
  display: grid;
  place-items: center;
  width: 25px;
  height: 33px;
  border-radius: 3px;
  background: ${(p) => SUITS[p.$s]};
  color: #fff;
  font: 24px/28px ${open};
`;
const Showdown = styled.section`
  height: 113px;
  padding: 12px 12px 0;
  background: #1c211f;
  h3 { font: 12px/20px ${roboto}; color: #fff; }
`;
const Outcomes = styled.div`
  display: grid;
  grid-template-columns: 187px 187px;
  padding: 14px 0 0 3px;
`;
const Outcome = styled.div`
  display: flex;
  align-items: center;
  gap: 9px;
  line-height: 19px;
  b { display: block; font-weight: 700; color: #5fcb5f; }
`;
const Result = styled.span<{ $won?: boolean }>`
  display: block;
  font-weight: 500;
  color: ${(p) => (p.$won ? "#a0e070" : "#e07868")};
`;
const HandFoot = styled.footer`
  display: flex;
  align-items: center;
  justify-content: flex-end;
  gap: 6px;
  height: 43px;
  padding: 5px 16px 0 0;
`;
const FootButton = styled.button<{ $big?: boolean }>`
  display: flex;
  align-items: center;
  justify-content: center;
  gap: ${(p) => (p.$big ? 10 : 6)}px;
  width: ${(p) => (p.$big ? 117 : 80)}px;
  height: ${(p) => (p.$big ? 35 : 28)}px;
  border: 1px solid #363c3a;
  border-radius: 4px;
  color: #e8e8e8;
  font: 500 11px/16px ${open};
`;
const ViewerBar = styled.footer`
  display: flex;
  align-items: center;
  height: 48px;
  padding: 0 18px 0 18px;
  background: #272727;
`;
const BarGroup = styled.div<{ $gap: number; $ml: number }>`
  display: flex;
  align-items: center;
  gap: ${(p) => p.$gap}px;
  margin-left: ${(p) => p.$ml}px;
`;

const PLAYERS = [
  ["EP", "StreetSlash (Hero)", "74935", "75 bb", "38/28"],
  ["MP", "boyrs1", "12850", "13 bb", "57/0"],
  ["CO", "Neo_2.0.", "17420", "17 bb", "31/8"],
  ["BTN", "mikii1312", "29453", "29 bb", "29/9"],
  ["SB", "a2line94", "66414", "66 bb", "49/5"],
  ["BB", "Divin.736045", "16638", "17 bb", "50/25"],
];

const Deal = ({ cards }: { cards: string }) => (
  <Cards>{cards.split(" ").map((c, i) => <Card key={i} $s={c[1]}>{c[0]}</Card>)}</Cards>
);

const PhotoViewer = () => (
  <Viewer>
    <ViewerTop>
      <EditButton>
        <Icon size={16} sw={1.2}>
          <path d="M8 13.500H2a1.500 1.500 0 0 1-1.500-1.500V2A1.500 1.500 0 0 1 2 .6h10A1.500 1.500 0 0 1 13.500 2v4M1 12.500l5-5 3 3" />
          <circle cx="9.500" cy="4.300" r="1.100" /><path d="M15 8l-4.500 4.500-1.500 2.500 2.500-1L16 9.500z" fill="currentColor" />
        </Icon>
        Edit
      </EditButton>
      <Dots />
      <FileName>Screensh...</FileName>
      <Dots />
      <VRule $l={19} $r={25} />
      <WinButtons><MinIcon /><MaxIcon /><CloseIcon /></WinButtons>
    </ViewerTop>
    <Hand>
      <HandHead>
        <HeadText><h2>500/1K ANTE 120 TEXAS HOLD'EM</h2><p>6 Players, 5/21/2025 10:54:39 PM, Winamax</p></HeadText>
        <HeadIcons>
          <Icon size={13}><circle cx="6.500" cy="6.500" r="5.500" strokeDasharray="2.400 1.920" strokeWidth="1.600" strokeLinecap="butt" /><circle cx="6.500" cy="6.500" r="4.600" /><circle cx="6.500" cy="6.500" r="2" /></Icon>
          <Icon size={13}><path d="M1 1l11 11M12 1L1 12" /></Icon>
        </HeadIcons>
      </HandHead>
      <Players>
        <table><tbody>
          {PLAYERS.map(([pos, name, stack, bb, stat], i) => (
            <tr key={pos}><HeroCell $hero={i === 0}>{pos}</HeroCell><HeroCell $hero={i === 0}>{name}</HeroCell><td>{stack}</td><td>{bb}</td><td>{stat}</td></tr>
          ))}
        </tbody></table>
      </Players>
      <Street $h={107}>
        <StreetRow><StreetName><h3>PREFLOP</h3><p>6 Players, 2.22 bb</p></StreetName><Deal cards="Ah 8c" /></StreetRow>
        <Actions><b>StreetSlash Рейз до 2bb,</b> 4 Фолд, Divin.736045 Рейз до 17bb, <b>StreetSlash Колл 15bb</b></Actions>
      </Street>
      <Street $h={60}><StreetRow><h3>FLOP</h3><Deal cards="Qh Ad 8h" /></StreetRow></Street>
      <Street $h={60}><StreetRow><h3>TURN</h3><Deal cards="Qh Ad 8h 2d" /></StreetRow></Street>
      <Street $h={59}><StreetRow><h3>RIVER</h3><Deal cards="Qh Ad 8h 2d Kh" /></StreetRow></Street>
      <Showdown>
        <h3>Showdown</h3>
        <Outcomes>
          <Outcome><Deal cards="Kc 2c" /><div>Divin.736045<br />Two Pairs<Result>Lost -16638</Result></div></Outcome>
          <Outcome><Deal cards="Ah 8c" /><div><b>StreetSlash</b>Two Pairs<Result $won>Won 17618</Result></div></Outcome>
        </Outcomes>
      </Showdown>
      <HandFoot>
        <FootButton $big>
          <Icon size={14}><path d="M3.500 11.500h-2a1 1 0 0 1-1-1v-9a1 1 0 0 1 1-1h4v12M5.500 3.500h4l3.500 3.500v6.500H5.500zM9.500 3.500V7H13" /></Icon>Копировать
        </FootButton>
        <FootButton>
          <Icon size={13}><path d="M1.500 4A5.600 5.600 0 1 1 1.200 8.500M1 1.500V4.500h3" /><path d="M5 4.500v4.500l4-2.200z" fill="currentColor" /></Icon>Replay
        </FootButton>
      </HandFoot>
    </Hand>
    <ViewerBar>
      <Icon size={16}><rect x=".5" y="2.500" width="15" height="11" rx="2" /><path d="M.5 10.500h15M4 10.500v3M7 10.500v3M10 10.500v3M13 10.500v3" /></Icon>
      <VRule $l={22} $r={20} />
      <BarGroup $gap={28} $ml={0}>
        <Icon size={16}><path d="M8 14.500L1.800 8.200a3.900 3.900 0 0 1 5.500-5.500L8 3.500l.7-.8a3.900 3.900 0 0 1 5.500 5.500z" opacity=".5" /></Icon>
        <Icon size={16}><circle cx="8" cy="8" r="7.300" /><path d="M8 7v4.500M8 4.500v.3" /></Icon>
        <Dots />
      </BarGroup>
      <BarGroup $gap={29} $ml={38}>
        <Icon size={15}><path d="M.5 9.500V12a2.500 2.500 0 0 0 2.500 2.500h2M10 14.500h2a2.500 2.500 0 0 0 2.500-2.500v-2M14.500 5V3A2.500 2.500 0 0 0 12 .5h-2M.5 3h4M2.500 1v4" /><circle cx="7.500" cy="8" r="1.800" /></Icon>
        <Icon size={15}><path d="M.5 5V3A2.500 2.500 0 0 1 3 .5h2M10 .5h2A2.500 2.500 0 0 1 14.500 3v2M14.500 10v2a2.500 2.500 0 0 1-2.500 2.500h-2M5 14.500H3A2.500 2.500 0 0 1 .5 12v-2M4 4.500h7M3 7.500h9M4 10.500h5" /></Icon>
      </BarGroup>
      <BarGroup $gap={28} $ml={83}>
        <Icon size={17} h={13} sw={1.3}><rect x=".7" y=".7" width="15.600" height="11.600" rx="1" /><circle cx="8.500" cy="6.500" r="3" fill="currentColor" /><path d="M3 4.500V3h1.500M12.500 3H14v1.500M14 8.500V10h-1.500M4.500 10H3V8.500" /></Icon>
        <Dots />
      </BarGroup>
      <VRule $l={20} $r={22} />
      <Icon size={15}><path d="M1 14L14 1M8.500.8h5.700v5.700M.8 8.500v5.700h5.700" /></Icon>
    </ViewerBar>
  </Viewer>
);

export default function App() {
  return (
    <>
      <Global />
      <Desktop>
        <AnalyserWindow />
        <SideWindow>ведение</SideWindow>
        <HandHistory />
        <Notes role="textbox" aria-label="Notes">
          {"Ср стадия. NOK = 26,7%.\nначальный стек 20000 "}<Squiggle>chips</Squiggle>
          {"\n1 "}<Squiggle>опп</Squiggle>{" 1х нок.\n"}<Squiggle>блайнды</Squiggle>
          {" 500/1000\n20000/1000 = 20х0,267 = 5,3бб\n2,2+2+17+15+5,3=41,5\n15/41,5=0,36=36% требуется "}
          <Squiggle>эквити</Squiggle>{" на кол"}
        </Notes>
        <SnippingTool />
        <PhotoViewer />
      </Desktop>
    </>
  );
}
